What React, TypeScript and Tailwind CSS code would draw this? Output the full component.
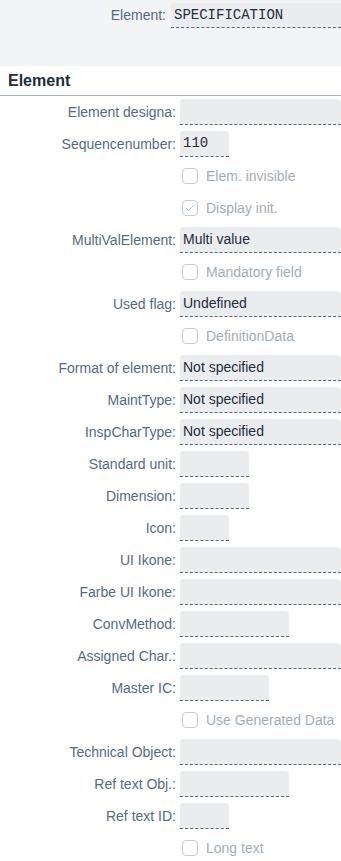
import { Check } from 'lucide-react'

type Row =
  | { kind: 'field'; label: string; value?: string; w?: string; mono?: boolean }
  | { kind: 'check'; label: string; checked?: boolean }

const rows: Row[] = [
  { kind: 'field', label: 'Element designa:', w: 'flex-1' },
  { kind: 'field', label: 'Sequencenumber:', value: '110', w: 'w-[49px]', mono: true },
  { kind: 'check', label: 'Elem. invisible' },
  { kind: 'check', label: 'Display init.', checked: true },
  { kind: 'field', label: 'MultiValElement:', value: 'Multi value', w: 'flex-1' },
  { kind: 'check', label: 'Mandatory field' },
  { kind: 'field', label: 'Used flag:', value: 'Undefined', w: 'flex-1' },
  { kind: 'check', label: 'DefinitionData' },
  { kind: 'field', label: 'Format of element:', value: 'Not specified', w: 'flex-1' },
  { kind: 'field', label: 'MaintType:', value: 'Not specified', w: 'flex-1' },
  { kind: 'field', label: 'InspCharType:', value: 'Not specified', w: 'flex-1' },
  { kind: 'field', label: 'Standard unit:', w: 'w-[69px]' },
  { kind: 'field', label: 'Dimension:', w: 'w-[69px]' },
  { kind: 'field', label: 'Icon:', w: 'w-[49px]' },
  { kind: 'field', label: 'UI Ikone:', w: 'flex-1' },
  { kind: 'field', label: 'Farbe UI Ikone:', w: 'flex-1' },
  { kind: 'field', label: 'ConvMethod:', w: 'w-[109px]' },
  { kind: 'field', label: 'Assigned Char.:', w: 'flex-1' },
  { kind: 'field', label: 'Master IC:', w: 'w-[89px]' },
  { kind: 'check', label: 'Use Generated Data' },
  { kind: 'field', label: 'Technical Object:', w: 'flex-1' },
  { kind: 'field', label: 'Ref text Obj.:', w: 'w-[109px]' },
  { kind: 'field', label: 'Ref text ID:', w: 'w-[49px]' },
  { kind: 'check', label: 'Long text' },
]

function Field({ value, w, mono }: { value?: string; w?: string; mono?: boolean }) {
  return (
    <div
      className={`${w} h-[26px] flex items-center px-[3px] rounded-t-[4px] bg-[#eaecee] border-b border-dashed border-[#556b82] text-[14px] text-[#1d2d3e] ${mono ? "font-['Liberation_Mono',monospace]" : ''}`}
    >
      {value}
    </div>
  )
}

export default function App() {
  return (
    <div className="w-[341px] h-[861px] overflow-hidden bg-white font-['Liberation_Sans',Arial,sans-serif]">
      <div className="h-[66px] bg-[#f3f4f5] pt-[3px]">
        <div className="flex items-start gap-[5px]">
          <span className="w-[166px] h-[25px] flex items-center justify-end text-[14px] text-[#556b82]">Element:</span>
          <div className="flex-1 h-[25px] flex items-center px-[3px] rounded-tl-[4px] bg-[#eaecee] border-b border-dashed border-[#556b82] text-[14px] text-[#1d2d3e] font-['Liberation_Mono',monospace]">
            SPECIFICATION
          </div>
        </div>
      </div>

      <div className="h-[30px] flex items-center pl-2 border-b border-[#a9b4be] text-[16px] font-bold text-[#1d2d3e]">
        Element
      </div>

      <div className="flex flex-col">
        {rows.map(r => (
          <div key={r.label} className="h-8 flex items-center gap-1">
            {r.kind === 'field' ? (
              <>
                <span className="w-[176px] text-right text-[14px] text-[#556b82] whitespace-nowrap">{r.label}</span>
                <Field value={r.value} w={r.w} mono={r.mono} />
              </>
            ) : (
              <>
                <span className="w-[176px]" />
                <div className="ml-[2px] flex items-center gap-2">
                  <span className="w-4 h-4 rounded-[4px] border border-[#c3cad2] bg-white flex items-center justify-center">
                    {r.checked && <Check size={12} strokeWidth={1.5} className="text-[#8fb5e6]" />}
                  </span>
                  <span className="text-[14px] text-[#a4adb7]">{r.label}</span>
                </div>
              </>
            )}
          </div>
        ))}
      </div>
    </div>
  )
}
